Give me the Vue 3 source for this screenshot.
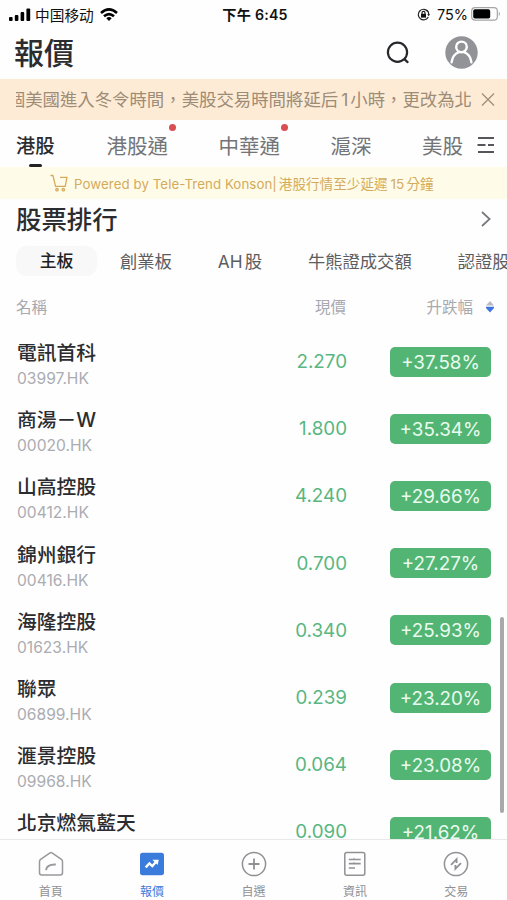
<script setup>
import { ref } from "vue";

const markets = [
  { name: "港股", dot: false },
  { name: "港股通", dot: true },
  { name: "中華通", dot: true },
  { name: "滬深", dot: false },
  { name: "美股", dot: false },
];
const activeMarket = ref("港股");

const boards = ["主板", "創業板", "AH 股", "牛熊證成交額", "認證股"];
const activeBoard = ref("主板");

const stocks = [
  { name: "電訊首科", code: "03997.HK", price: "2.270", change: "+37.58%" },
  { name: "商湯－W", code: "00020.HK", price: "1.800", change: "+35.34%" },
  { name: "山高控股", code: "00412.HK", price: "4.240", change: "+29.66%" },
  { name: "錦州銀行", code: "00416.HK", price: "0.700", change: "+27.27%" },
  { name: "海隆控股", code: "01623.HK", price: "0.340", change: "+25.93%" },
  { name: "聯眾", code: "06899.HK", price: "0.239", change: "+23.20%" },
  { name: "滙景控股", code: "09968.HK", price: "0.064", change: "+23.08%" },
  { name: "北京燃氣藍天", code: "", price: "0.090", change: "+21.62%" },
];
</script>

<template>
  <div class="app">
    <!-- Status bar -->
    <div class="status">
      <div class="status-left">
        <svg width="22" height="13" viewBox="0 0 22 13">
          <rect x="0" y="9" width="3.6" height="4" rx="1" />
          <rect x="5.8" y="7" width="3.6" height="6" rx="1" />
          <rect x="11.6" y="4" width="3.6" height="9" rx="1" />
          <rect x="17.4" y="0.5" width="3.8" height="12.5" rx="1" />
        </svg>
        <span class="carrier">中国移动</span>
        <svg class="wifi" width="18" height="13" viewBox="0 0 18 13" fill="none" stroke="#000" stroke-width="2.6">
          <path d="M1 5Q9-2.2 17 5" />
          <path d="M4 8.3Q9 3.8 14 8.3" />
          <path d="M6.3 10.2Q9 7.8 11.7 10.2L9 13Z" fill="#000" stroke="none" />
        </svg>
      </div>
      <div class="status-time">下午 6:45</div>
      <div class="status-right">
        <svg width="13" height="13" viewBox="0 0 13 13" fill="none" stroke="#222" stroke-width="1.2">
          <path d="M11 3.6A5.3 5.3 0 1 0 11.3 9" />
          <path d="M9.9 2.2A5.3 5.3 0 0 1 11.8 7" />
          <path d="M10.2 6.2H13L11.6 8.2Z" fill="#222" stroke="none" />
          <rect x="4" y="5.8" width="5" height="3.8" fill="#111" stroke="none" />
          <path d="M5 6V4.9A1.5 1.5 0 0 1 8 4.9V6" />
        </svg>
        <span class="percent">75%</span>
        <svg class="battery" width="30" height="14" viewBox="0 0 30 14">
          <rect x="0.7" y="0.7" width="25.6" height="12.4" rx="3.4" fill="#fff" stroke="#a5a5a5" stroke-width="1.2" />
          <rect x="2.2" y="2.2" width="17" height="9.4" rx="1.8" />
          <path d="M27.8 4.6Q29.8 7 27.8 9.3Z" fill="#999" />
        </svg>
      </div>
    </div>

    <header class="header">
      <h1>報價</h1>
      <svg class="search" width="24" height="24" viewBox="0 0 24 24" fill="none" stroke="#26282c" stroke-width="2.2" stroke-linecap="round">
        <circle cx="11.5" cy="11.3" r="9.6" />
        <path d="M18.6 18.4L21.6 21.1" />
      </svg>
      <svg class="user" width="33" height="33" viewBox="0 0 33 33" fill="none" stroke="#fff" stroke-width="2.4" stroke-linecap="round">
        <circle cx="16.5" cy="16.5" r="16.2" fill="#929397" stroke="none" />
        <circle cx="16.5" cy="10.9" r="5.3" />
        <path d="M6.6 26.4C7.2 20.8 10.4 17.4 14 16.1M19 16.1C22.6 17.4 25.8 20.8 26.4 26.4" />
      </svg>
    </header>

    <!-- Scrolling notice -->
    <div class="notice">
      <div class="notice-text">
        <span>個美國進入冬令時間，美股交易時間將延后<b>1</b>小時，更改為北</span>
      </div>
      <svg width="14" height="14" viewBox="0 0 14 14" fill="none" stroke="#9d8c76" stroke-width="1.2">
        <path d="M1 0.5L13 12.5M13 0.5L1 12.5" />
      </svg>
    </div>

    <nav class="markets">
      <a
        v-for="market in markets"
        :key="market.name"
        class="market"
        :class="{ active: market.name === activeMarket }"
        @click="activeMarket = market.name"
      >
        {{ market.name }}
        <i v-if="market.dot" class="dot"></i>
      </a>
      <svg class="menu" width="18" height="18" viewBox="0 0 18 18" fill="none" stroke="#55565a" stroke-width="1.8">
        <path d="M1 2H17M0.5 9H8.5M11 9H17M1 16H17" />
      </svg>
    </nav>

    <div class="powered">
      <svg width="18" height="18" viewBox="0 0 18 18" fill="none" stroke="#d3ab5c" stroke-width="1.3" stroke-linejoin="round">
        <path d="M0.5 1.5H3L5.5 12.3H15.2L17 3.4H10" />
        <circle cx="7" cy="15.7" r="1.2" />
        <circle cx="13.3" cy="15.7" r="1.2" />
      </svg>
      <span class="powered-by">Powered by Tele-Trend Konson|</span>
      <span class="powered-note">港股行情至少延遲<b>15</b>分鐘</span>
    </div>

    <div class="section">
      <h2>股票排行</h2>
      <svg width="10" height="16" viewBox="0 0 10 16" fill="none" stroke="#77787c" stroke-width="1.7">
        <path d="M1 1L8.6 8L1 15" />
      </svg>
    </div>

    <div class="boards">
      <a
        v-for="board in boards"
        :key="board"
        class="board"
        :class="{ active: board === activeBoard }"
        @click="activeBoard = board"
        >{{ board }}</a
      >
    </div>

    <div class="columns">
      <span>名稱</span>
      <span class="col-price">現價</span>
      <span class="col-change">升跌幅</span>
      <svg width="8" height="12" viewBox="0 0 8 12">
        <path d="M4 0L8 4.6H0Z" fill="#b7bac4" />
        <path d="M0 5.8H8V7L4 11.4L0 7Z" fill="#3f73e0" />
      </svg>
    </div>

    <div class="list">
      <div v-for="stock in stocks" :key="stock.name" class="row">
        <div class="stock">
          <p class="stock-name">{{ stock.name }}</p>
          <p class="stock-code">{{ stock.code }}</p>
        </div>
        <span class="price">{{ stock.price }}</span>
        <span class="change">{{ stock.change }}</span>
      </div>
      <div class="scrollbar"></div>
    </div>

    <!-- Bottom tabs -->
    <footer class="tabbar">
      <div class="tab">
        <svg width="26" height="26" viewBox="0 0 26 26" fill="none" stroke="#98999d" stroke-width="1.5" stroke-linejoin="round">
          <path d="M12 1.9Q13 1.1 14 1.9L23.4 8.4Q24.5 9.2 24.5 10.6V21.8Q24.5 24 22.3 24H3.7Q1.5 24 1.5 21.8V10.6Q1.5 9.2 2.6 8.4Z" />
          <path d="M8 19.2C8.4 14.8 12 13.3 17.8 13.5" stroke-width="1.9" />
        </svg>
        <span>首頁</span>
      </div>
      <div class="tab active">
        <svg width="26" height="26" viewBox="0 0 26 26">
          <rect x="1" y="1.8" width="24" height="22.4" rx="2.6" fill="#3b7bdc" />
          <path d="M6.7 16.4L10.4 12.4L13.3 15L17.3 10.5" fill="none" stroke="#fff" stroke-width="2.3" />
          <path d="M13.4 8.8H19.8L18.6 14Z" fill="#fff" />
        </svg>
        <span>報價</span>
      </div>
      <div class="tab">
        <svg width="26" height="26" viewBox="0 0 26 26" fill="none" stroke="#909195" stroke-width="1.5">
          <circle cx="13" cy="13" r="11.6" />
          <path d="M13 7.5V18.5M7.5 13H18.5" stroke-width="1.8" />
        </svg>
        <span>自選</span>
      </div>
      <div class="tab">
        <svg width="26" height="26" viewBox="0 0 26 26" fill="none" stroke="#909195" stroke-width="1.5">
          <rect x="2.8" y="1.6" width="20" height="22.6" rx="2" />
          <path d="M6.8 8.5H18.7M6.8 12.7H18.7M6.8 17H13" stroke-width="1.7" />
          <path d="M11 8.5L12.5 7.2M11 12.7L12.5 11.4" stroke-width="1" />
        </svg>
        <span>資訊</span>
      </div>
      <div class="tab">
        <svg width="26" height="26" viewBox="0 0 26 26" fill="none" stroke="#909195" stroke-width="1.5">
          <circle cx="13" cy="13" r="11.6" />
          <path d="M8 13.8L13.6 8.2V12M18 12.2L12.4 17.8V14" stroke-width="1.8" />
        </svg>
        <span>交易</span>
      </div>
    </footer>
  </div>
</template>

<style>
body {
  background: #fff;
}
</style>

<style scoped>
.app {
  display: flex;
  flex-direction: column;
  width: 507px;
  height: 900px;
  overflow: hidden;
  background: #fefefe;
  color: #2b2c30;
  font-family: Inter, "Noto Sans CJK TC", sans-serif;
}

h1,
h2,
p {
  margin: 0;
}

svg {
  display: block;
  flex: none;
}

.status {
  display: grid;
  grid-template-columns: 1fr auto 1fr;
  align-items: center;
  height: 27px;
  padding: 0 6px 0 9px;
  color: #111;
  line-height: 27px;
}
.status-left,
.status-right {
  display: flex;
  align-items: center;
}
.status-right {
  justify-content: flex-end;
}
.carrier {
  margin: 0 6px 0 4px;
  font-family: "Noto Sans CJK SC", sans-serif;
  font-size: 14.7px;
  line-height: 25px;
}
.status-time {
  padding-top: 1px;
  font-family: Inter, "Noto Sans CJK SC", sans-serif;
  font-size: 14.2px;
  font-weight: 600;
  letter-spacing: 0.2px;
}
.percent {
  margin: 0 3px 0 7px;
  font-size: 14.5px;
}

.header {
  display: flex;
  align-items: center;
  height: 52px;
  padding: 0 29px 0 14px;
  box-sizing: border-box;
}
.header h1 {
  flex: 1;
  font-size: 30px;
  font-weight: 500;
  line-height: 50px;
}
.search {
  margin-right: 35px;
}
.user {
  margin-top: -2px;
}

.notice {
  display: flex;
  align-items: center;
  justify-content: space-between;
  height: 41px;
  padding: 0 12px 0 16px;
  background: #fdebd6;
  color: #9d8c76;
}
.notice-text {
  display: flex;
  justify-content: flex-end;
  width: 456px;
  overflow: hidden;
  font-size: 17.4px;
  line-height: 41px;
  white-space: nowrap;
}
.notice-text b {
  margin: 0 2px 0 3px;
  font-weight: 400;
}

.markets {
  display: flex;
  align-items: center;
  height: 47px;
  padding: 0 12px 0 16px;
}
.market {
  position: relative;
  height: 47px;
  margin-right: 50.5px;
  color: #737478;
  font-size: 20.5px;
  line-height: 53px;
  white-space: nowrap;
}
.market:nth-child(5) {
  margin-right: 0;
}
.market.active {
  margin-right: 52px;
  color: #2b2c30;
  font-size: 19.3px;
  font-weight: 500;
}
.market.active::after {
  content: "";
  position: absolute;
  bottom: 0;
  left: 13px;
  width: 13px;
  height: 3px;
  border-radius: 2px;
  background: #222;
}
.dot {
  position: absolute;
  top: 4px;
  right: -8px;
  width: 7px;
  height: 7px;
  border-radius: 50%;
  background: #d94e50;
}
.menu {
  margin: 2px 0 0 auto;
}

.powered {
  display: flex;
  align-items: center;
  height: 32px;
  padding-left: 50px;
  background: #fffbe9;
  color: #d3ab5c;
  font-size: 13.3px;
  white-space: nowrap;
}
.powered-by {
  margin-left: 6px;
  padding-top: 1px;
  letter-spacing: 0.06px;
}
.powered-note {
  margin-left: 2px;
  font-size: 13.6px;
}
.powered-note b {
  margin: 0 2px 0 3px;
  font-weight: 400;
}

.section {
  display: flex;
  align-items: center;
  justify-content: space-between;
  height: 40px;
  padding: 0 16px;
}
.section h2 {
  padding-top: 2px;
  font-size: 25.4px;
  font-weight: 500;
  line-height: 40px;
}

.boards {
  display: flex;
  height: 30px;
  margin: 7px 0 0 16px;
  overflow: hidden;
}
.board {
  flex: none;
  margin-right: 46px;
  color: #5c5d61;
  font-size: 17.3px;
  line-height: 31px;
  word-spacing: -2.8px;
}
.board.active {
  width: 81px;
  margin-right: 23px;
  border-radius: 11px;
  background: #f8f8f9;
  color: #222;
  font-size: 16.8px;
  font-weight: 500;
  text-align: center;
}

.columns {
  display: flex;
  align-items: center;
  height: 30px;
  margin-top: 16px;
  padding: 0 13px 0 16px;
  color: #a8a9af;
  font-size: 15.5px;
  line-height: 31px;
}
.col-price {
  margin-left: auto;
}
.col-change {
  width: 127px;
  margin-right: 13px;
  text-align: right;
}

.list {
  position: relative;
  flex: 1;
  padding-top: 6px;
  overflow: hidden;
}
.row {
  display: flex;
  align-items: center;
  height: 67.2px;
  padding: 0 16px 0 17px;
}
.stock {
  flex: 1;
  padding-top: 7px;
}
.stock-name {
  font-size: 19.8px;
  font-weight: 500;
  line-height: 28px;
}
.stock-code {
  height: 24px;
  color: #abacb1;
  font-size: 15.6px;
  line-height: 24px;
}
.price {
  margin-right: 43px;
  color: #59b680;
  font-size: 18.8px;
}
.change {
  width: 101px;
  height: 30px;
  border-radius: 5px;
  background: #53b574;
  color: #e9fbef;
  font-size: 18.8px;
  line-height: 31px;
  text-align: center;
}
.scrollbar {
  position: absolute;
  top: 295px;
  right: 3px;
  width: 4px;
  height: 196px;
  border-radius: 2px;
  background: #a9a9a9;
}

.tabbar {
  display: flex;
  height: 61px;
  border-top: 1px solid #e9e9ea;
  box-sizing: border-box;
}
.tab {
  display: flex;
  flex: 1;
  flex-direction: column;
  align-items: center;
  padding-top: 11px;
  color: #909195;
  font-size: 12px;
  line-height: 18px;
}
.tab span {
  margin-top: 6px;
}
.tab.active {
  color: #3b7bdc;
}
</style>
